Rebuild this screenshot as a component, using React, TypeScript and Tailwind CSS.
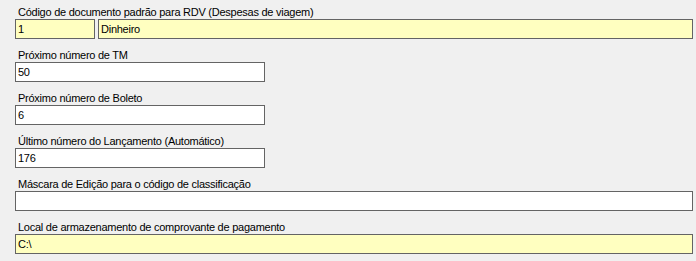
import React from "react";

const font = { fontFamily: '"Liberation Sans", Arial, sans-serif' };

function Label({ children }: { children: React.ReactNode }) {
  return <div className="pl-[18px] h-[13px] leading-[13px] text-[11px] tracking-[-0.25px] text-black whitespace-nowrap">{children}</div>;
}

function Box({ value, yellow, className }: { value?: string; yellow?: boolean; className: string }) {
  return (
    <div
      className={`h-[20px] border border-[#646464] pl-[2px] text-[11px] tracking-[-0.25px] leading-[18px] text-black whitespace-nowrap ${yellow ? "bg-[#ffffc0]" : "bg-white"} ${className}`}
    >
      {value}
    </div>
  );
}

export default function App() {
  return (
    <div className="w-[696px] h-[261px] bg-[#f0f0f0] pt-[6px] flex flex-col gap-[10px]" style={font}>
      <div>
        <Label>Código de documento padrão para RDV (Despesas de viagem)</Label>
        <div className="flex gap-[3px] pl-[15px]">
          <Box value="1" yellow className="w-[80px]" />
          <Box value="Dinheiro" yellow className="w-[595px]" />
        </div>
      </div>
      <div>
        <Label>Próximo número de TM</Label>
        <div className="pl-[15px]">
          <Box value="50" className="w-[250px]" />
        </div>
      </div>
      <div>
        <Label>Próximo número de Boleto</Label>
        <div className="pl-[15px]">
          <Box value="6" className="w-[250px]" />
        </div>
      </div>
      <div>
        <Label>Último número do Lançamento (Automático)</Label>
        <div className="pl-[15px]">
          <Box value="176" className="w-[250px]" />
        </div>
      </div>
      <div>
        <Label>Máscara de Edição para o código de classificação</Label>
        <div className="pl-[15px]">
          <Box value="" className="w-[678px]" />
        </div>
      </div>
      <div>
        <Label>Local de armazenamento de comprovante de pagamento</Label>
        <div className="pl-[15px]">
          <Box value="C:\" yellow className="w-[678px]" />
        </div>
      </div>
    </div>
  );
}
